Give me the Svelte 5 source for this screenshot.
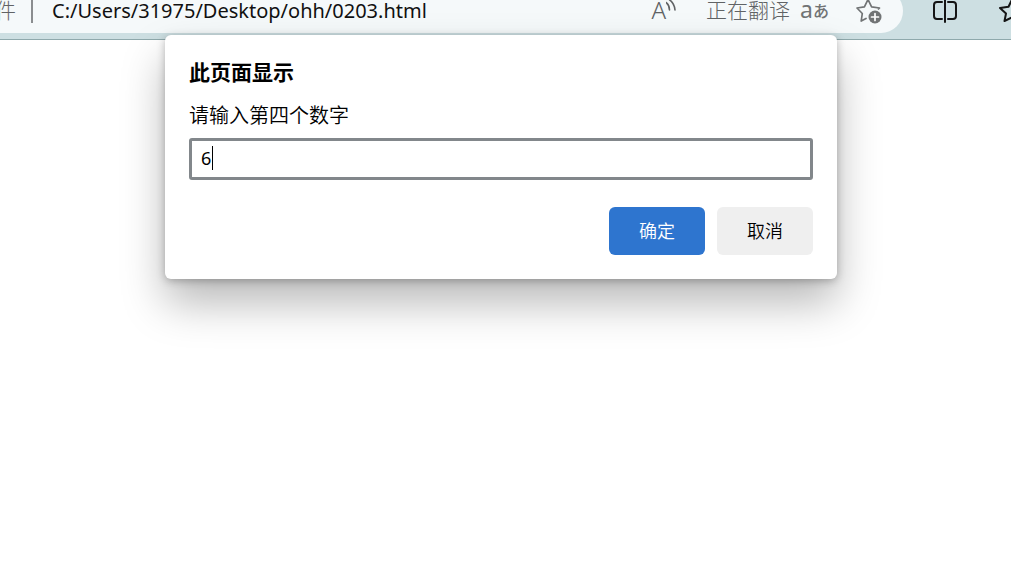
<script>
  let answer = $state('6')
</script>

<header class="toolbar">
  <div class="address">
    <span class="scheme">文件</span>
    <span class="divider"></span>
    <span class="url">C:/Users/31975/Desktop/ohh/0203.html</span>
    <div class="actions">
      <button class="read" aria-label="朗读">
        <span>A</span>
        <svg width="10" height="16" viewBox="0 0 10 16" aria-hidden="true">
          <path d="M0 4.5Q3.5 7 3.5 12M2.5 1Q8.5 5 9 12" />
        </svg>
      </button>
      <span class="status">正在翻译</span>
      <button class="translate" aria-label="翻译"><span class="latin">a</span><span class="kana">あ</span></button>
      <button class="favorite" aria-label="收藏">
        <svg width="28" height="28" viewBox="0 0 28 28" aria-hidden="true">
          <path d="M11 21.5L6.2 24L7.3 16.5L2 11L9.4 9.8L13 2.5L16.6 9.8L24.5 11L23.5 12" />
          <circle cx="20" cy="20" r="6.5" />
          <path class="plus" d="M16.5 20H23.5M20 16.5V23.5" />
        </svg>
      </button>
    </div>
  </div>
  <button class="split" aria-label="拆分屏幕">
    <svg width="26" height="26" viewBox="0 0 26 26" aria-hidden="true">
      <path d="M10 4H5Q2 4 2 7V18Q2 21 5 21H10M16 4H21Q24 4 24 7V18Q24 21 21 21H16M13 1V24" />
    </svg>
  </button>
  <button class="saved" aria-label="收藏夹">
    <svg width="28" height="28" viewBox="0 0 28 28" aria-hidden="true">
      <path d="M14 2.5L17.5 9.8L26 11L20 16.5L21.5 24L14 20.5L6.5 24L8 16.5L2 11L10.5 9.8Z" />
    </svg>
  </button>
</header>

<main>
  <form class="dialog" onsubmit={(e) => e.preventDefault()}>
    <h1>此页面显示</h1>
    <label for="answer">请输入第四个数字</label>
    <div class="field">
      <input id="answer" type="text" autocomplete="off" bind:value={answer} />
      <span class="caret"></span>
    </div>
    <div class="buttons">
      <button class="ok" type="submit">确定</button>
      <button class="cancel" type="button">取消</button>
    </div>
  </form>
</main>

<style>
  :global(body) {
    background: #ffffff;
    font-family: "Noto Sans", "Noto Sans CJK SC", sans-serif;
  }

  button {
    border: 0;
    padding: 0;
    background: none;
    color: inherit;
    font: inherit;
  }

  svg {
    display: block;
    flex: none;
    fill: none;
    stroke: currentColor;
    stroke-width: 2;
    stroke-linecap: round;
    stroke-linejoin: round;
  }

  .toolbar {
    display: flex;
    height: 39px;
    overflow: hidden;
    background: #cddfe2;
    border-bottom: 1px solid #8fa9ac;
  }

  .address {
    flex: 1;
    display: flex;
    align-items: center;
    height: 44px;
    margin-top: -11px;
    padding-right: 20px;
    background: #f5f9fa;
    border-radius: 0 22px 22px 0;
    font-size: 20px;
    line-height: 24px;
    white-space: nowrap;
  }

  .scheme,
  .status {
    padding-bottom: 4px;
    font-family: "Noto Sans CJK SC", sans-serif;
    font-size: 21px;
    font-weight: 300;
    color: #606365;
  }

  .scheme {
    display: flex;
    justify-content: flex-end;
    width: 16px;
    overflow: hidden;
  }

  .divider {
    width: 2px;
    height: 24px;
    margin: 0 19px 0 15px;
    background: #8a8d8f;
  }

  .url {
    color: #111111;
  }

  .actions {
    display: flex;
    align-items: center;
    margin-left: auto;
    color: #717475;
  }

  .read {
    display: flex;
    margin-right: 30px;
    padding-bottom: 2px;
    color: #606365;
    font-size: 24px;
    font-weight: 300;
  }

  .read svg {
    stroke-width: 1.6;
  }

  .status {
    margin-right: 10px;
  }

  .translate {
    display: flex;
    align-items: center;
    margin-right: 26px;
    padding-bottom: 4px;
  }

  .latin {
    font-size: 23px;
  }

  .kana {
    padding-top: 2px;
    font-family: "Noto Sans CJK JP", sans-serif;
    font-size: 16px;
    font-weight: 500;
  }

  .favorite svg {
    stroke-width: 1.7;
  }

  .favorite circle {
    fill: currentColor;
    stroke: none;
  }

  .favorite .plus {
    stroke: #ffffff;
  }

  .split,
  .saved {
    height: 22px;
    display: flex;
    align-items: center;
    color: #151515;
  }

  .split {
    margin: 0 40px 0 29px;
  }

  .saved {
    width: 13px;
  }

  main {
    display: flex;
    align-items: flex-start;
    justify-content: center;
    box-sizing: border-box;
    min-height: calc(100vh - 40px);
    padding: 0 174px 0 165px;
  }

  .dialog {
    position: relative;
    flex: 1;
    box-sizing: border-box;
    max-width: 672px;
    margin-top: -5px;
    padding: 22px 24px 24px;
    background: #ffffff;
    border-radius: 6px;
    box-shadow: 0 24px 44px rgba(0, 0, 0, 0.28), 0 2px 8px rgba(0, 0, 0, 0.26);
    color: #000000;
  }

  h1 {
    margin: 0 0 16px;
    font-family: "Noto Sans CJK SC", sans-serif;
    font-size: 21px;
    line-height: 28px;
    font-weight: 700;
  }

  label {
    display: block;
    margin-bottom: 9px;
    font-family: "Noto Sans CJK SC", sans-serif;
    font-size: 20px;
    line-height: 28px;
    font-weight: 350;
  }

  .field {
    position: relative;
  }

  input {
    display: block;
    box-sizing: border-box;
    width: 100%;
    height: 42px;
    padding: 0 9px 2px;
    border: 3px solid #82878b;
    border-radius: 3px;
    outline: none;
    background: #ffffff;
    caret-color: transparent;
    color: #000000;
    font-family: "Noto Sans", sans-serif;
    font-size: 18px;
  }

  .caret {
    position: absolute;
    top: 8px;
    left: 23px;
    width: 1px;
    height: 24px;
    background: #000000;
  }

  .buttons {
    display: flex;
    justify-content: flex-end;
    gap: 12px;
    margin-top: 27px;
  }

  .buttons button {
    width: 96px;
    height: 48px;
    padding-bottom: 2px;
    border-radius: 6px;
    font-family: "Noto Sans CJK SC", sans-serif;
    font-size: 18px;
    font-weight: 350;
  }

  .ok {
    background: #2e75cf;
    color: #ffffff;
  }

  .cancel {
    background: #efefef;
  }
</style>
